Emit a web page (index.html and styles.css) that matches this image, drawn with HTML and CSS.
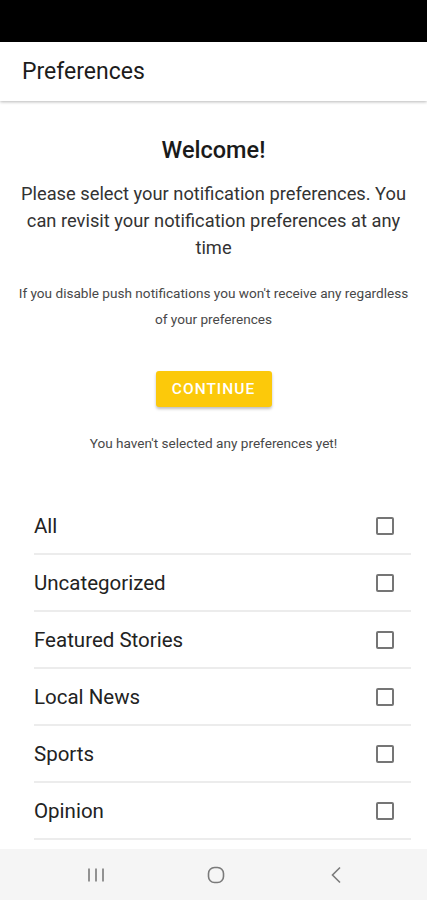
FILE: index.html
```html
<!DOCTYPE html>
<html lang="en">
<head>
    <meta charset="UTF-8">
    <meta name="viewport" content="width=device-width, initial-scale=1.0">
    <title>Preferences</title>
    <link rel="stylesheet" href="styles.css">
</head>
<body>
    <div class="phone">
        <div class="status-bar"></div>

        <div class="app-bar">Preferences</div>

        <div class="content">
            <h1 class="welcome">Welcome!</h1>
            <p class="intro">Please select your notification preferences. You can revisit your notification preferences at any time</p>
            <p class="note">If you disable push notifications you won't receive any regardless of your preferences</p>

            <div class="actions">
                <button class="continue">Continue</button>
            </div>

            <p class="hint">You haven't selected any preferences yet!</p>

            <ul class="pref-list">
                <li class="pref-row"><span>All</span><span class="checkbox"></span></li>
                <li class="pref-row"><span>Uncategorized</span><span class="checkbox"></span></li>
                <li class="pref-row"><span>Featured Stories</span><span class="checkbox"></span></li>
                <li class="pref-row"><span>Local News</span><span class="checkbox"></span></li>
                <li class="pref-row"><span>Sports</span><span class="checkbox"></span></li>
                <li class="pref-row"><span>Opinion</span><span class="checkbox"></span></li>
            </ul>
        </div>

        <div class="nav-bar">
            <div class="nav-item">
                <svg width="18" height="16" viewBox="0 0 18 16">
                    <path d="M2 1.5v13M9 1.5v13M16 1.5v13" stroke="#7a7a7a" stroke-width="1.6" fill="none"/>
                </svg>
            </div>
            <div class="nav-item">
                <svg width="18" height="18" viewBox="0 0 18 18">
                    <rect x="1.5" y="1.5" width="15" height="15" rx="6" stroke="#7a7a7a" stroke-width="1.6" fill="none"/>
                </svg>
            </div>
            <div class="nav-item">
                <svg width="12" height="18" viewBox="0 0 12 18">
                    <path d="M10 1.5L2.5 9l7.5 7.5" stroke="#7a7a7a" stroke-width="1.6" fill="none"/>
                </svg>
            </div>
        </div>
    </div>
</body>
</html>
```

FILE: styles.css
```css
body {
    margin: 0;
    padding: 0;
    font-family: Roboto, "Noto Sans", sans-serif;
    background-color: white;
}
.phone {
    width: 427px;
    height: 900px;
    display: flex;
    flex-direction: column;
    overflow: hidden;
}
.status-bar {
    height: 42px;
    background-color: black;
    flex-shrink: 0;
}
.app-bar {
    height: 59px;
    flex-shrink: 0;
    box-sizing: border-box;
    padding: 0 22px;
    display: flex;
    align-items: center;
    font-size: 23px;
    color: #1c1c1c;
    background-color: white;
    box-shadow: 0 1px 3px rgba(0, 0, 0, 0.28);
    position: relative;
    z-index: 1;
}
.content {
    flex: 1;
    overflow: hidden;
    text-align: center;
}
.welcome {
    margin: 35px 0 0;
    font-size: 23.5px;
    line-height: 28px;
    font-weight: 500;
    color: #1a1a1a;
}
.intro {
    margin: 16px 18px 0;
    font-size: 18.3px;
    line-height: 27px;
    color: #333;
}
.note {
    margin: 19px 14px 0;
    font-size: 13.6px;
    line-height: 26px;
    color: #484848;
}
.actions {
    margin-top: 39px;
}
.continue {
    width: 116px;
    height: 36px;
    border: none;
    border-radius: 3px;
    background-color: #fcc90a;
    color: white;
    font-family: Roboto, sans-serif;
    font-size: 15.5px;
    font-weight: 500;
    letter-spacing: 1px;
    text-transform: uppercase;
    box-shadow: 0 2px 3px rgba(0, 0, 0, 0.25);
}
.hint {
    margin: 27px 0 0;
    font-size: 13.6px;
    line-height: 18px;
    color: #484848;
}
.pref-list {
    list-style: none;
    margin: 46px 16px 0 34px;
    padding: 0;
    text-align: left;
}
.pref-row {
    height: 57px;
    box-sizing: border-box;
    padding-right: 17px;
    border-bottom: 2px solid #ececec;
    display: flex;
    align-items: center;
    justify-content: space-between;
    font-size: 20.5px;
    color: #222;
}
.checkbox {
    width: 18px;
    height: 18px;
    box-sizing: border-box;
    border: 2px solid #757575;
    border-radius: 2px;
}
.nav-bar {
    height: 51px;
    flex-shrink: 0;
    background-color: #f5f5f5;
    display: flex;
    justify-content: center;
    align-items: center;
    padding-left: 5px;
}
.nav-item {
    width: 120px;
    display: flex;
    justify-content: center;
}
```
